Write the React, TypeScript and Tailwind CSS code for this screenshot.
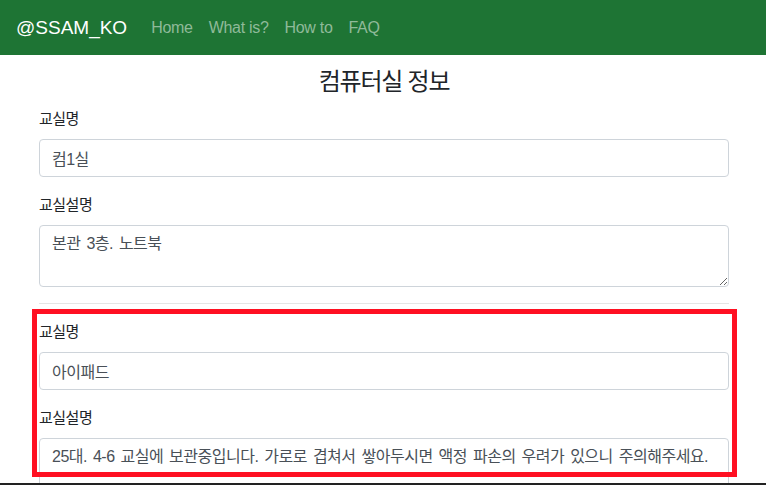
import React from "react";

const font = { fontFamily: '"Liberation Sans", "Noto Sans CJK KR", sans-serif' };

function Field({ label, value, multi, tall }: { label: string; value: string; multi?: boolean; tall?: boolean }) {
  return (
    <div className="mb-4">
      <label className="block text-[15px] leading-6 mb-2 text-[#212529] tracking-[-0.5px]">{label}</label>
      {multi ? (
        <textarea
          readOnly
          value={value}
          className={`block w-full ${tall ? "h-[100px]" : "h-[62px]"} rounded-[4px] border border-[#ced4da] px-3 py-[6px] text-[16px] leading-6 text-[#495057] tracking-[-0.5px] [word-spacing:2px] resize-y outline-none`}
          style={font}
        />
      ) : (
        <input
          readOnly
          value={value}
          className="block w-full h-[38px] rounded-[4px] border border-[#ced4da] px-3 py-[6px] text-[16px] leading-6 text-[#495057] tracking-[-0.5px] [word-spacing:2px] outline-none"
          style={font}
        />
      )}
    </div>
  );
}

export default function App() {
  return (
    <div className="h-[485px] overflow-hidden flex flex-col bg-white" style={font}>
      <div className="flex-1 overflow-hidden">
        <nav className="h-[55px] bg-[#1e7434] flex items-center px-4">
          <span className="text-white text-[19px] mr-4 leading-[30px]">@SSAM_KO</span>
          <div className="flex text-[16px] text-[#8fba99] tracking-[-0.3px]">
            <span className="px-2">Home</span>
            <span className="px-2">What is?</span>
            <span className="px-2">How to</span>
            <span className="px-2">FAQ</span>
          </div>
        </nav>
        <div className="w-[720px] mx-auto pl-[16px] pr-[14px] relative pt-[12px]">
          <h4 className="mt-0 mb-[11px] h-[29px] leading-[29px] text-center text-[24px] text-[#212529] tracking-[-1.2px]">
            컴퓨터실 정보
          </h4>
          <Field label="교실명" value="컴1실" />
          <Field label="교실설명" value="본관 3층. 노트북" multi />
          <hr className="mt-0 mb-4 border-t border-[#e5e5e5]" />
          <Field label="교실명" value="아이패드" />
          <Field
            label="교실설명"
            value="25대. 4-6 교실에 보관중입니다. 가로로 겹쳐서 쌓아두시면 액정 파손의 우려가 있으니 주의해주세요."
            multi
            tall
          />
          <div className="absolute left-[9px] top-[254px] w-[705px] h-[168px] border-[5px] border-[#ff1022] pointer-events-none" />
        </div>
      </div>
      <div className="h-[2px] bg-[#222]" />
    </div>
  );
}
